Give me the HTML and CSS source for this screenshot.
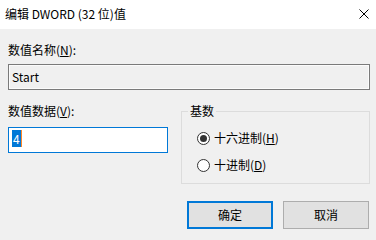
FILE: index.html
```html
<!DOCTYPE html>
<html lang="zh-CN">
<head>
<meta charset="utf-8">
<title>编辑 DWORD (32 位)值</title>
<link rel="stylesheet" href="styles.css">
</head>
<body>
<div class="dialog">
  <div class="titlebar">
    <span class="title">编辑 DWORD (32 位)值</span>
    <span class="close">
      <svg width="10" height="10" viewBox="0 0 10 10"><path d="M0.5 0.5 L9.5 9.5 M9.5 0.5 L0.5 9.5" stroke="#000" stroke-width="1" fill="none"/></svg>
    </span>
  </div>
  <div class="body">
    <div class="label first">数值名称(<u>N</u>):</div>
    <div class="namebox">Start</div>
    <div class="row">
      <div class="leftcol">
        <div class="label second">数值数据(<u>V</u>):</div>
        <div class="databox"><span class="sel">4</span></div>
      </div>
      <fieldset class="group">
        <legend>基数</legend>
        <div class="radio"><span class="dot checked"></span><span>十六进制(<u>H</u>)</span></div>
        <div class="radio"><span class="dot"></span><span>十进制(<u>D</u>)</span></div>
      </fieldset>
    </div>
    <div class="buttons">
      <div class="btn default">确定</div>
      <div class="btn">取消</div>
    </div>
  </div>
</div>
</body>
</html>
```
FILE: styles.css
```css
* { box-sizing: border-box; }
html, body { margin: 0; padding: 0; }
body {
  width: 376px;
  height: 233px;
  overflow: hidden;
  background: #f0f0f0;
  font-family: "Noto Sans CJK SC", "Noto Sans", sans-serif;
  font-size: 12px;
  line-height: 16px;
  color: #000;
}
u { text-decoration: underline; text-underline-offset: 1px; }
.titlebar {
  height: 29px;
  background: #fff;
  display: flex;
  align-items: center;
  justify-content: space-between;
  padding: 0 7px 0 5px;
}
.title { font-size: 12px; margin-top: -2px; }
.close { display: flex; margin-top: -2px; }
.body { padding: 0 6px 0 8px; }
.label.first { margin-top: 13px; }
.namebox {
  margin-top: 6px;
  height: 26px;
  border: 1px solid #7a7a7a;
  background: #f0f0f0;
  padding: 4px 3px;
  box-shadow: inset 0 0 0 1px #fbfbfb;
}
.row { display: flex; gap: 13px; margin-top: 13px; }
.leftcol { width: 160px; }
.label.second { margin-top: 0; }
.databox {
  margin-top: 8px;
  height: 26px;
  border: 1px solid #0078d7;
  background: #fff;
  padding: 2px 3px;
}
.sel {
  display: inline-block;
  background: #0078d7;
  color: #fff;
  height: 17px;
  line-height: 17px;
  padding: 0 1px 0 1px;
  border-right: 1px solid #ff8728;
}
.group {
  margin: 0;
  width: 189px;
  height: 81px;
  border: 1px solid #dcdcdc;
  padding: 11px 0 0 15px;
}
.group legend { padding: 0 2px; margin-left: -9px; line-height: 16px; }
.radio { display: flex; align-items: center; gap: 4px; height: 16px; margin-bottom: 11px; }
.dot {
  width: 13px;
  height: 13px;
  border: 1px solid #333;
  border-radius: 50%;
  background: #fff;
  display: flex;
  align-items: center;
  justify-content: center;
}
.dot.checked::after {
  content: "";
  width: 7px;
  height: 7px;
  border-radius: 50%;
  background: #333;
}
.buttons { display: flex; justify-content: flex-end; gap: 10px; margin-top: 17px; padding-right: 1px; }
.btn {
  width: 86px;
  height: 28px;
  background: #e1e1e1;
  border: 1px solid #adadad;
  display: flex;
  align-items: center;
  justify-content: center;
}
.btn.default { border: 2px solid #0078d7; }
```
